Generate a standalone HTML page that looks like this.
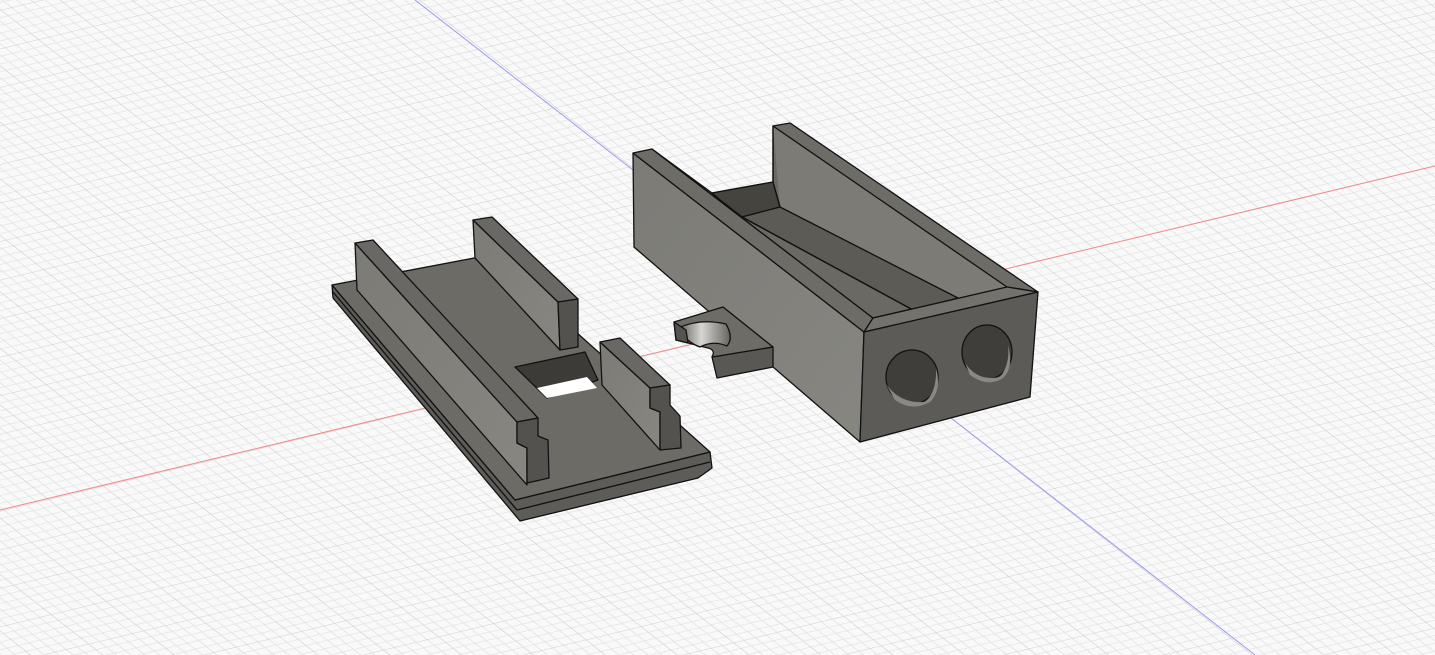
<!DOCTYPE html>
<html><head><meta charset="utf-8"><style>
html,body{margin:0;padding:0;background:#f8f8f8;overflow:hidden}
svg{display:block}
</style></head><body>
<svg width="1435" height="655" viewBox="0 0 1435 655" xmlns="http://www.w3.org/2000/svg">
<defs>
<pattern id="g" width="50" height="50" patternUnits="userSpaceOnUse" patternTransform="matrix(1.1 -0.265 0.75 0.59 818 314)">
<rect width="50" height="50" fill="#f9f9f9"/>
<path d="M10 0V50M20 0V50M30 0V50M40 0V50M0 10H50M0 20H50M0 30H50M0 40H50" stroke="#e3e3e3" stroke-width="0.9"/>
<path d="M0 0V50M0 0H50" stroke="#cfcfcf" stroke-width="1.3"/>
</pattern>
<linearGradient id="lit" x1="0" y1="0" x2="1" y2="1"><stop offset="0" stop-color="#7c7b76"/><stop offset="1" stop-color="#878681"/></linearGradient>
<linearGradient id="bowl" x1="0" x2="1"><stop offset="0" stop-color="#5a5853"/><stop offset="0.45" stop-color="#d8d6d2"/><stop offset="1" stop-color="#66645f"/></linearGradient>
</defs>
<rect width="1435" height="655" fill="url(#g)"/>
<line x1="0" y1="510" x2="1435" y2="166" stroke="#f08a8a" stroke-width="1"/>
<line x1="415" y1="0" x2="1255" y2="655" stroke="#9a9af0" stroke-width="1"/>

<g stroke="#111" stroke-width="1.3" stroke-linejoin="round">
<!-- LEFT PIECE -->
<polygon points="332,285 515,500 710,452 712,468 698,478 520,521 333,298" fill="#5e5c58"/>
<line x1="333" y1="292" x2="517" y2="510"/><line x1="517" y1="510" x2="710" y2="462"/>
<polygon points="332,285 490,255 710,452 515,500" fill="#6d6b66"/>
<polygon points="515,367 585,352 598,380 547,398" fill="#3c3b38"/>
<polygon points="537,388 587,377 597,388 547,398" fill="#ffffff" stroke="none"/>
<polygon points="473,220 558,302 560,350 475,258" fill="url(#lit)"/>
<polygon points="473,220 492,217 578,299 558,302" fill="#6a6864"/>
<polygon points="558,302 578,299 578,347 560,350" fill="#54524e"/>
<polygon points="355,243 517,422 517,443 527,448 527,485 357,290" fill="url(#lit)"/>
<polygon points="355,243 373,240 538,418 517,422" fill="#6a6864"/>
<polygon points="517,422 538,418 538,436 548,440 549,478 527,483 527,448 517,443" fill="#54524e"/>
<polygon points="600,342 650,388 650,408 660,412 660,450 602,385" fill="url(#lit)"/>
<polygon points="600,342 620,338 670,385 650,388" fill="#6a6864"/>
<polygon points="650,388 670,385 670,405 680,416 681,448 660,450 660,412 650,408" fill="#54524e"/>

<!-- RIGHT PIECE -->
<polygon points="633,153 864,332 860,442 634,247" fill="url(#lit)"/>
<polygon points="633,153 652,149 873,318 864,332" fill="#6e6c67"/>
<!-- tab -->
<polygon points="712,357 773,347 773,367 717,378" fill="#5a5854"/>
<path d="M674,322 L723,307 L773,347 L712,357 Q716,350 708,348 Q696,345 688,343 L676,340 Z" fill="#6e6c67"/>
<path d="M678,328 Q700,318 726,324 Q734,338 727,346 Q713,340 700,347 Q686,342 678,328 Z" fill="url(#bowl)"/>
<polygon points="674,322 676,340 688,343 686,330" fill="#55534f"/>
<!-- cavity -->
<polygon points="652,149 712,193 773,182 773,126 1007,287 873,318" fill="#6b6964"/>
<polygon points="773,126 1007,287 958,298 780,207" fill="#7d7b76" stroke="none"/>
<polygon points="712,193 773,182 780,207 742,217 720,200" fill="#46443f"/>
<polygon points="742,217 780,207 958,298 913,310" fill="#5d5b56"/>
<line x1="742" y1="217" x2="913" y2="310"/>
<polyline points="712,193 720,200 742,217" fill="none"/>
<line x1="780" y1="207" x2="773" y2="182"/>
<polygon points="773,126 790,123 1038,292 1007,287" fill="#6e6c67"/>
<line x1="773" y1="126" x2="773" y2="182"/>
<polygon points="864,332 873,318 1007,287 1038,292" fill="#74726d"/>
<polygon points="864,332 1038,292 1030,397 860,442" fill="#5d5b57"/>
<ellipse cx="912" cy="377" rx="26" ry="27" fill="#3f3e3b"/>
<path d="M886,384 Q900,404 925,402 Q937,392 936,368 Q942,390 930,402 Q912,412 895,400 Z" fill="#8a8883" stroke="none"/>
<ellipse cx="987" cy="352" rx="25" ry="27" fill="#3f3e3b"/>
<path d="M965,363 Q978,382 1000,377 Q1010,365 1008,345 Q1014,368 1003,378 Q988,388 970,375 Z" fill="#8a8883" stroke="none"/>
</g>
</svg>
</body></html>
